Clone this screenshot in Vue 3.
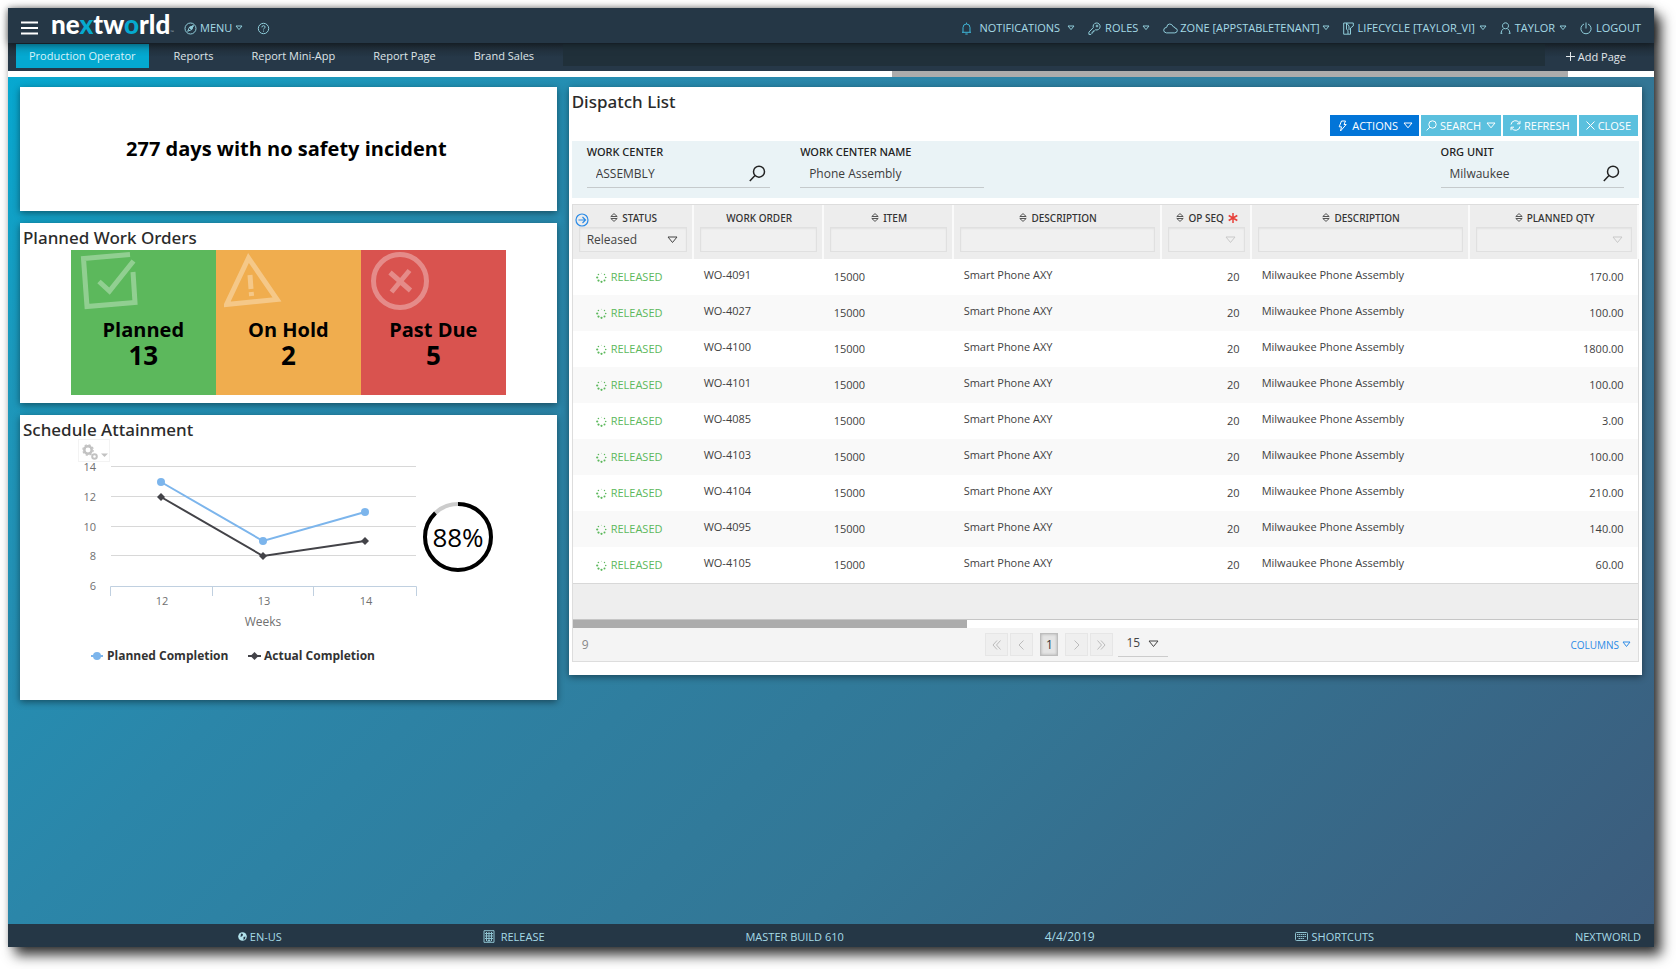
<script setup>
import { ref } from 'vue'

const tabs = ['Production Operator', 'Reports', 'Report Mini-App', 'Report Page', 'Brand Sales']
const activeTab = ref(0)

const orders = [
  ['WO-4091', '170.00'],
  ['WO-4027', '100.00'],
  ['WO-4100', '1800.00'],
  ['WO-4101', '100.00'],
  ['WO-4085', '3.00'],
  ['WO-4103', '100.00'],
  ['WO-4104', '210.00'],
  ['WO-4095', '140.00'],
  ['WO-4105', '60.00'],
].map(([id, qty]) => ({ id, qty }))

const status = ref('Released')
const pageSize = ref('15')
const workCenter = ref('ASSEMBLY')
const workCenterName = ref('Phone Assembly')
const orgUnit = ref('Milwaukee')

const columns = [
  { label: 'STATUS', sort: true, kind: 'status' },
  { label: 'WORK ORDER', sort: false, kind: 'text' },
  { label: 'ITEM', sort: true, kind: 'text' },
  { label: 'DESCRIPTION', sort: true, kind: 'text' },
  { label: 'OP SEQ', sort: true, kind: 'number', required: true },
  { label: 'DESCRIPTION', sort: true, kind: 'text' },
  { label: 'PLANNED QTY', sort: true, kind: 'number' },
]

const gridLines = [
  { v: 14, y: 28 },
  { v: 12, y: 58 },
  { v: 10, y: 88 },
  { v: 8, y: 117 },
]
const weeks = [
  { v: 12, x: 84 },
  { v: 13, x: 186 },
  { v: 14, x: 288 },
]
const planned = [[83, 43], [185, 102], [287, 73]]
const actual = [[83, 58], [185, 117], [287, 102]]
const line = (pts) => pts.map((p) => p.join(',')).join(' ')
</script>

<template>
  <div class="frame">
    <header class="topbar">
      <button class="plain burger" aria-label="Open navigation">
        <svg width="17" height="14" viewBox="0 0 17 14"><path d="M0 1.5h17M0 7h17M0 12.5h17" stroke="#fff" stroke-width="2" /></svg>
      </button>
      <a href="#" class="logo">ne<span>x</span>tw<span>o</span>rld<small>™</small></a>
      <button class="plain nav menu">
        <svg width="13" height="13" viewBox="0 0 13 13"><circle cx="6.5" cy="6.5" r="5.5" /><path d="M9.3 3.7 7.6 7.6 3.7 9.3 5.4 5.4z" /><path class="fill" d="M9.3 3.7 7.6 7.6 5.4 5.4z" /></svg>
        MENU
        <svg class="tri" width="8" height="6" viewBox="0 0 8 6"><path d="M1 1h6L4 4.6z" /></svg>
      </button>
      <button class="plain nav help" aria-label="Help">
        <svg width="13" height="13" viewBox="0 0 13 13"><circle cx="6.5" cy="6.5" r="5.2" /><path d="M4.9 5.3q0-1.6 1.6-1.6t1.6 1.4q0 .8-.9 1.2-.7.4-.7 1.1M6.5 8.6v1" /></svg>
      </button>
      <nav class="right">
        <button class="plain nav bell">
          <svg width="11" height="13" viewBox="0 0 11 13"><path d="M1 10.3h9M2 10.3V5.6q0-3.6 3.5-3.6T9 5.6v4.7M5.5.6V2M4.3 12h2.4" /></svg>
          NOTIFICATIONS
          <svg class="tri" width="8" height="6" viewBox="0 0 8 6"><path d="M1 1h6L4 4.6z" /></svg>
        </button>
        <button class="plain nav">
          <svg width="13" height="13" viewBox="0 0 13 13"><path d="M5.3 5.6a3.5 3.5 0 1 1 2.2 2.2L6.4 8.9H5.3v1.2H4.1v1.2L3 12.4H.9v-2.3z" /><circle cx="9" cy="4" r=".9" /></svg>
          ROLES
          <svg class="tri" width="8" height="6" viewBox="0 0 8 6"><path d="M1 1h6L4 4.6z" /></svg>
        </button>
        <button class="plain nav cloud">
          <svg width="15" height="11" viewBox="0 0 15 11"><path d="M3.4 9.9h8.4q2.5-.3 2.5-2.5 0-2-2.4-2.4-.2-1.5-1.7-1.3Q9.200 1 6.700 1 4 1 3.700 4.300.7 4.600.7 7.200q.1 2.400 2.700 2.700z" /></svg>
          ZONE [APPSTABLETENANT]
          <svg class="tri" width="8" height="6" viewBox="0 0 8 6"><path d="M1 1h6L4 4.6z" /></svg>
        </button>
        <button class="plain nav">
          <svg width="11" height="13" viewBox="0 0 11 13"><path d="M.7 1h9.600v3L7.500 6v6.200H.7zM3.500 1v6l1.500 1.800V12M3.500 1 6 4v4" /></svg>
          LIFECYCLE [TAYLOR_VI]
          <svg class="tri" width="8" height="6" viewBox="0 0 8 6"><path d="M1 1h6L4 4.6z" /></svg>
        </button>
        <button class="plain nav">
          <svg width="11" height="12" viewBox="0 0 11 12"><path d="M5.500 6.800a3 3 0 1 1 .01 0M1 11.500q0-3.500 2.800-5M10 11.500q0-3.500-2.800-5M.7 11.300h1.600M8.700 11.300h1.600" /></svg>
          TAYLOR
          <svg class="tri" width="8" height="6" viewBox="0 0 8 6"><path d="M1 1h6L4 4.6z" /></svg>
        </button>
        <button class="plain nav">
          <svg width="12" height="13" viewBox="0 0 12 13"><path d="M4 2a5.100 5.100 0 1 0 4 0M6 .5v6" /></svg>
          LOGOUT
        </button>
      </nav>
    </header>

    <nav class="tabbar">
      <div class="tabs">
        <a v-for="(t, i) in tabs" :key="t" href="#" class="tab" :class="{ on: activeTab === i }" @click.prevent="activeTab = i">{{ t }}</a>
      </div>
      <div class="tabfill"></div>
      <button class="plain addpage">
        <svg width="9" height="9" viewBox="0 0 9 9"><path d="M4.500 0v9M0 4.500h9" stroke="#e2e7ea" /></svg>
        Add Page
      </button>
    </nav>
    <div class="hscroll"><div class="thumb"></div></div>

    <main class="board">
      <div class="col">
        <section class="panel safety"><p>277 days with no safety incident</p></section>

        <section class="panel planned">
          <h2>Planned Work Orders</h2>
          <div class="tiles">
            <div class="tile green">
              <svg width="60" height="60" viewBox="0 0 60 60"><path d="M51 4.500 4.500 8.500 8 56.500l48-4L54 22" /><path d="M20 31.500 30.500 41 54.500 11" /></svg>
              <b>Planned</b><strong>13</strong>
            </div>
            <div class="tile amber">
              <svg width="60" height="60" viewBox="0 0 60 60"><path d="M24.500 8 2.500 54.500 53 49.500z" /><path d="m26 25 1 14M27.200 42l.4 4" /></svg>
              <b>On Hold</b><strong>2</strong>
            </div>
            <div class="tile red">
              <svg width="60" height="60" viewBox="0 0 60 60"><circle cx="31" cy="31" r="26.500" /><path d="m21 22.500 20.500 18M40.500 20.500 22.500 42" /></svg>
              <b>Past Due</b><strong>5</strong>
            </div>
          </div>
        </section>

        <section class="panel schedule">
          <h2>Schedule Attainment</h2>
          <div class="attain">
            <div class="chartbox">
              <svg width="341" height="230" viewBox="0 0 341 230" class="chart">
                <g stroke="#d8d8d8">
                  <path v-for="g in gridLines" :key="g.v" :d="`M33 ${g.y - 0.5}H338`" />
                </g>
                <path d="M32.500 157V147.500H338.500V157M134.500 147.500V157M235.500 147.500V157" fill="none" stroke="#c0d0e0" />
                <g class="axis" text-anchor="end">
                  <text v-for="g in gridLines" :key="g.v" x="18" :y="g.y + 4">{{ g.v }}</text>
                  <text x="18" y="151">6</text>
                </g>
                <g class="axis" text-anchor="middle">
                  <text v-for="w in weeks" :key="w.v" :x="w.x" y="166">{{ w.v }}</text>
                  <text x="185" y="187" class="weeks">Weeks</text>
                </g>
                <polyline :points="line(planned)" fill="none" stroke="#7cb5ec" stroke-width="2" />
                <circle v-for="p in planned" :key="p[0]" :cx="p[0]" :cy="p[1]" r="4" fill="#7cb5ec" />
                <polyline :points="line(actual)" fill="none" stroke="#434348" stroke-width="2" />
                <path v-for="p in actual" :key="p[0]" :d="`M${p[0]} ${p[1] - 4}l4 4-4 4-4-4z`" fill="#434348" />
                <g class="legend">
                  <path d="M13 217h12" stroke="#7cb5ec" stroke-width="2" /><circle cx="19" cy="217" r="4" fill="#7cb5ec" />
                  <text x="29" y="221">Planned Completion</text>
                  <path d="M170 217h13" stroke="#434348" stroke-width="2" /><path d="m176.500 213 4 4-4 4-4-4z" fill="#434348" />
                  <text x="186" y="221">Actual Completion</text>
                </g>
              </svg>
              <button class="plain gears" aria-label="Chart settings">
                <svg width="26" height="18" viewBox="0 0 26 18"><g fill="none" stroke="#c2c2c2"><circle cx="6" cy="7" r="3.700" stroke-width="2.500" /><circle cx="6" cy="7" r="5.200" stroke-width="1.200" stroke-dasharray="2.200 1.880" /><circle cx="12.500" cy="13.500" r="2.300" stroke-width="2" /></g><path d="M19 10.500h7L22.500 14z" fill="#c2c2c2" /></svg>
              </button>
            </div>
            <svg class="gauge" width="72" height="72" viewBox="0 0 72 72">
              <circle cx="36" cy="36" r="33" fill="none" stroke="#ccc" stroke-width="4" />
              <circle cx="36" cy="36" r="33" fill="none" stroke="#000" stroke-width="4" pathLength="100" stroke-dasharray="88 12" transform="rotate(-90 36 36)" />
              <text x="36" y="46" text-anchor="middle">88%</text>
            </svg>
          </div>
        </section>
      </div>

      <section class="panel dispatch">
        <h2>Dispatch List</h2>
        <div class="actions">
          <button class="act primary">
            <svg width="9" height="12" viewBox="0 0 9 12"><path d="M3.500 1h4L6 4.500h2.200L2.500 11l1-4.200H1.200z" /></svg>ACTIONS
            <svg class="tri" width="10" height="7" viewBox="0 0 10 7"><path d="M1 1h8L5 5.800z" /></svg>
          </button>
          <button class="act find">
            <svg width="11" height="11" viewBox="0 0 11 11"><circle cx="6.500" cy="4.500" r="3.700" /><path d="M3.800 7.200.6 10.400" /></svg>SEARCH
            <svg class="tri" width="10" height="7" viewBox="0 0 10 7"><path d="M1 1h8L5 5.800z" /></svg>
          </button>
          <button class="act">
            <svg width="11" height="11" viewBox="0 0 11 11"><path d="M1 4.500A4.500 4.500 0 0 1 9.500 3.200M10 .8v3H7M10 6.500A4.500 4.500 0 0 1 1.500 7.800M1 10.200v-3h3" /></svg>REFRESH
          </button>
          <button class="act">
            <svg width="9" height="9" viewBox="0 0 9 9"><path d="m.5.5 8 8M8.500.5l-8 8" /></svg>CLOSE
          </button>
        </div>

        <div class="filters">
          <div class="field">
            <label for="wc">WORK CENTER</label>
            <div class="line">
              <input id="wc" v-model="workCenter" type="text" />
              <button class="plain" aria-label="Look up work center"><svg width="17" height="17" viewBox="0 0 17 17"><circle cx="10" cy="6.700" r="5.500" /><path d="M6 10.600.8 16" /></svg></button>
            </div>
          </div>
          <div class="field">
            <label for="wcn">WORK CENTER NAME</label>
            <div class="line"><input id="wcn" v-model="workCenterName" type="text" /></div>
          </div>
          <div class="field last">
            <label for="org">ORG UNIT</label>
            <div class="line">
              <input id="org" v-model="orgUnit" type="text" />
              <button class="plain" aria-label="Look up org unit"><svg width="17" height="17" viewBox="0 0 17 17"><circle cx="10" cy="6.700" r="5.500" /><path d="M6 10.600.8 16" /></svg></button>
            </div>
          </div>
        </div>

        <div class="gridbox">
          <table>
            <colgroup><col class="c1" /><col class="c2" /><col class="c2" /><col class="c4" /><col class="c5" /><col class="c6" /><col class="c7" /></colgroup>
            <thead>
              <tr>
                <th v-for="(c, i) in columns" :key="i" scope="col">
                  <button v-if="c.kind === 'status'" class="plain expand" aria-label="Expand list">
                    <svg width="14" height="14" viewBox="0 0 14 14"><circle cx="7" cy="7" r="6" /><path d="M3.500 7h7M7.500 4l3 3-3 3" /></svg>
                  </button>
                  <div class="cap">
                    <svg v-if="c.sort" width="8" height="9" viewBox="0 0 8 9"><path d="M.8 3.500h6.400L4 .6zM.8 5.500h6.400L4 8.400z" /></svg>
                    <span>{{ c.label }}</span>
                    <svg v-if="c.required" class="req" width="10" height="10" viewBox="0 0 10 10"><path d="M5 0v10M.7 2.500l8.600 5M9.300 2.500l-8.600 5" /></svg>
                  </div>
                  <div v-if="c.kind === 'status'" class="pick box">
                    <select v-model="status" aria-label="Filter by status"><option>Released</option></select>
                    <svg width="11" height="8" viewBox="0 0 11 8"><path d="M1 1h9L5.500 6.500z" /></svg>
                  </div>
                  <div v-else-if="c.kind === 'number'" class="pick box faint">
                    <select :aria-label="'Filter by ' + c.label"><option></option></select>
                    <svg width="11" height="8" viewBox="0 0 11 8"><path d="M1 1h9L5.500 6.500z" /></svg>
                  </div>
                  <input v-else class="box" type="text" :aria-label="'Filter by ' + c.label" />
                </th>
              </tr>
            </thead>
            <tbody>
              <tr v-for="o in orders" :key="o.id">
                <td class="status">
                  <div>
                    <svg width="11" height="11" viewBox="0 0 11 11"><circle cx="9.700" cy="5.500" r=".8" /><circle cx="8.500" cy="8.500" r="1" /><circle cx="5.500" cy="9.800" r="1.100" /><circle cx="2.500" cy="8.600" r="1.100" /><circle cx="1.200" cy="5.500" r="1.100" /><circle cx="2.400" cy="2.500" r=".8" /><circle cx="5.500" cy="1.200" r=".4" /><circle cx="8.500" cy="2.500" r=".7" /></svg>
                    RELEASED
                  </div>
                </td>
                <td class="up">{{ o.id }}</td>
                <td>15000</td>
                <td class="up">Smart Phone AXY</td>
                <td class="num">20</td>
                <td class="up">Milwaukee Phone Assembly</td>
                <td class="num qty">{{ o.qty }}</td>
              </tr>
            </tbody>
          </table>
          <div class="sumrow"></div>
          <div class="gscroll"><div></div></div>
          <div class="pager">
            <span class="count">9</span>
            <div class="pages">
              <button class="pg" aria-label="First page"><svg width="9" height="10" viewBox="0 0 9 10"><path d="m5 .5-4 4.500 4 4.500M8.500.5l-4 4.500 4 4.500" /></svg></button>
              <button class="pg" aria-label="Previous page"><svg width="9" height="10" viewBox="0 0 9 10"><path d="M6.500.5 2 5l4.500 4.500" /></svg></button>
              <button class="pg cur">1</button>
              <button class="pg" aria-label="Next page"><svg width="9" height="10" viewBox="0 0 9 10"><path d="M2.500.5 7 5 2.500 9.500" /></svg></button>
              <button class="pg" aria-label="Last page"><svg width="9" height="10" viewBox="0 0 9 10"><path d="m.5.5 4 4.500-4 4.500M4 .5 8 5 4 9.500" /></svg></button>
              <div class="pick size">
                <select v-model="pageSize" aria-label="Rows per page"><option>15</option></select>
                <svg width="11" height="8" viewBox="0 0 11 8"><path d="M1 1h9L5.500 6.500z" /></svg>
              </div>
            </div>
            <button class="plain cols">COLUMNS <svg width="9" height="7" viewBox="0 0 9 7"><path d="M1 1h7L4.500 5.500z" /></svg></button>
          </div>
        </div>
      </section>
    </main>

    <footer class="status-bar">
      <span class="lead"></span>
      <span><svg width="9" height="9" viewBox="0 0 9 9"><circle cx="4.500" cy="4.500" r="4.300" fill="#b3e3ec" /><path d="M3 1.500 5 2 4.500 4 2.500 5zM5.500 5l2-.5-.5 2.500-1.500 1z" fill="#253746" /></svg>EN-US</span>
      <span class="wide"><svg width="12" height="13" viewBox="0 0 12 13"><path d="M1 .7h10v11.600H1zM3.500 2v9M6 2v8M8.500 2v9M2 3.500h8M2 6h8M2 8.500h8M5 12v-1.500h2V12" fill="none" stroke="#8fc3d0" /></svg>RELEASE</span>
      <span>MASTER BUILD 610</span>
      <span class="date">4/4/2019</span>
      <span><svg width="13" height="9" viewBox="0 0 13 9"><rect x=".5" y=".5" width="12" height="8" rx="1" fill="none" stroke="#8fc3d0" /><path d="M2 2.500h9M2 4.500h9M3.500 6.500h6" stroke="#8fc3d0" stroke-dasharray="1.500 .5" /></svg>SHORTCUTS</span>
      <span>NEXTWORLD</span>
    </footer>
  </div>
</template>

<style>
html, body { background: #fff; }
body { margin: 0; }
</style>

<style scoped>
* { box-sizing: border-box; }
.frame {
  margin: 8px 22px 22px 8px;
  min-height: calc(100vh - 30px);
  display: flex;
  flex-direction: column;
  background: #fff;
  box-shadow: 7px 8px 12px rgba(0, 0, 0, .8), 0 0 5px rgba(0, 0, 0, .15);
  font-family: "Open Sans", "Noto Sans", sans-serif;
  font-size: 11px;
  color: #333;
}
button, input, select { font: inherit; color: inherit; border-radius: 0; }
.plain { background: none; border: 0; padding: 0; cursor: pointer; }
svg { display: block; flex: none; }
h2, .field label, th { font-family: "Noto Sans", "Open Sans", sans-serif; font-weight: 500; }
h2 { margin: 0; font-size: 17px; line-height: 24px; color: #2b2b2b; }

.topbar {
  height: 35px;
  display: flex;
  align-items: center;
  background: #253746;
  padding: 5px 13px 0;
  position: relative;
  box-shadow: 0 1px 8px rgba(0, 0, 0, .5);
}
.logo {
  margin-left: 13px;
  font: 900 26px/28px Lato, sans-serif;
  color: #fff;
  text-decoration: none;
}
.logo span { color: #06a9cf; }
.logo small { font-size: 5px; font-weight: 400; color: #8fa0ab; }
.nav {
  display: flex;
  align-items: center;
  gap: 4px;
  color: #a5dbe7;
  line-height: 16px;
  white-space: nowrap;
}
.nav svg { fill: none; stroke: #8fccd9; stroke-width: 1; }
.nav svg .fill { fill: #8fccd9; }
.menu { margin-left: 10px; gap: 3px; }
.help { margin-left: 14px; }
.bell { gap: 7px; }
.bell svg:first-child { stroke: #3fb6d8; }
.cloud { gap: 2px; }
.right { margin-left: auto; display: flex; gap: 13px; }

.tabbar { display: flex; height: 28px; background: linear-gradient(#1f2b35, #263848 50%); }
.tabs { display: flex; gap: 12px; padding: 1px 16px 3px 8px; }
.tab {
  padding: 0 13px;
  line-height: 24px;
  color: #dfe5e8;
  text-decoration: none;
  white-space: nowrap;
}
.tab.on { background: linear-gradient(#0a96b9, #04a9d1 50%); color: #d9f3f9; }
.tabfill { flex: 1; margin: 1px 0 5px; background: #20303a; }
.addpage {
  display: flex;
  align-items: center;
  gap: 3px;
  padding: 0 28px 2px 21px;
  color: #e2e7ea;
}
.hscroll { height: 6px; background: #fff; padding-right: 86px; }
.thumb { height: 6px; width: 676px; max-width: 50%; margin-left: auto; background: #acacac; }

.board {
  flex: 1;
  display: grid;
  grid-template-columns: minmax(0, 1fr) minmax(0, 2fr);
  align-items: start;
  gap: 12px;
  padding: 10px 12px;
  background: linear-gradient(135deg, #06a8d0, #1c98bb 12%, #268cb0 25%, #2b86a9 34%, #337695 66%, #3c5b7b);
}
.col { display: flex; flex-direction: column; gap: 12px; }
.panel { background: #fff; box-shadow: 0 2px 7px rgba(0, 0, 0, .45); padding: 3px; }
.safety { height: 124px; display: flex; align-items: center; justify-content: center; padding: 0 4px 2px 0; }
.safety p { margin: 0; font-size: 20px; font-weight: 700; color: #000; }
.planned { padding-bottom: 8px; }
.tiles { display: grid; grid-template-columns: repeat(3, 145px); justify-content: center; }
.tile {
  height: 145px;
  display: flex;
  flex-direction: column;
  align-items: center;
  color: #000;
}
.tile svg { align-self: flex-start; margin-left: 8px; height: 60px; fill: none; stroke: rgba(255, 255, 255, .33); stroke-width: 5; }
.tile b { font-size: 20px; line-height: 26px; margin-top: 7px; }
.tile strong { font-size: 26px; line-height: 25px; }
.green { background: #5cb85c; }
.amber { background: #f0ad4e; }
.red { background: #d9534f; }

.schedule { min-height: 285px; }
.attain { display: flex; justify-content: center; margin-top: -3px; padding-right: 4px; gap: 3px; }
.chartbox { position: relative; }
.gears { position: absolute; left: 0; top: 0; width: 32px; height: 23px; padding: 3px; border: 1px solid #f3f3f3; }
.axis text { font-size: 11px; fill: #707070; }
.axis .weeks { font-size: 12px; }
.legend text { font-size: 12px; font-weight: 700; fill: #333; }
.gauge { margin-top: 62px; }
.gauge text { font-size: 26px; fill: #000; }

.dispatch { padding-bottom: 13px; }
.actions { display: flex; justify-content: flex-end; gap: 2px; margin: 1px 1px 5px; }
.act {
  height: 21px;
  display: flex;
  align-items: center;
  gap: 3px;
  padding: 0 7px;
  border: 0;
  background: #5bc0de;
  color: #fff;
  cursor: pointer;
}
.act svg { fill: none; stroke: #fff; }
.act .tri { margin-left: 2px; }
.find { padding: 0 5px; }
.primary { background: #0275d8; gap: 5px; padding: 0 6px 0 8px; }
.primary .tri { margin-left: 0; }

.filters { display: grid; grid-template-columns: repeat(5, minmax(0, 1fr)); background: #eaf3f6; height: 57px; }
.field { padding: 3px 15px; }
.field.last { grid-column: 5; }
.field label { display: block; line-height: 16px; color: #222; }
.line { display: flex; align-items: center; height: 28px; border-bottom: 1px solid #c5cacc; padding: 0 4px 0 9px; }
.line input { flex: 1; min-width: 0; border: 0; background: none; padding: 0; font-size: 12px; height: 22px; color: #3c3c3c; }
.line svg { fill: none; stroke: #222; stroke-width: 1.500; }

.gridbox { margin-top: 6px; border: 1px solid #ddd; }
table { width: 100%; table-layout: fixed; border-collapse: collapse; }
.c1 { width: 120px; }
.c2 { width: 130px; }
.c4 { width: 208px; }
.c5 { width: 90px; }
.c6 { width: 218px; }
.c7 { width: 169px; }
th {
  position: relative;
  height: 54px;
  padding: 3px 5px 7px 6px;
  background: #ededed;
  border-right: 2px solid #fafafa;
  font-size: 10px;
  vertical-align: top;
  color: #333;
}
.cap { display: flex; align-items: center; justify-content: center; gap: 4px; height: 19px; padding-left: 2px; }
.cap svg { fill: none; stroke: #555; stroke-width: 1; }
.cap .req { stroke: #e8403a; stroke-width: 1.500; }
.expand { position: absolute; left: 2px; top: 8px; }
.expand svg { fill: none; stroke: #2c8be6; stroke-width: 1.200; }
.box { display: block; width: 100%; height: 25px; border: 1px solid #e0e0e0; background: #f0f0f0; box-shadow: inset 0 1px 2px rgba(0, 0, 0, .06); padding: 0 7px; }
.pick { display: grid; align-items: center; }
.pick > * { grid-area: 1 / 1; }
.pick svg { justify-self: end; pointer-events: none; fill: none; stroke: #444; margin-right: 1px; }
.pick select { appearance: none; width: 100%; height: 23px; border: 0; padding: 0; background: none; font-family: "Open Sans", sans-serif; font-size: 12px; font-weight: 400; color: #444; }
.faint svg { stroke: #c9c9c9; }
td { height: 36px; padding: 0 11px; line-height: 16px; color: #3f3f3f; white-space: nowrap; }
td.up { padding-bottom: 4px; }
td.num { text-align: right; }
td.qty { padding-right: 14px; }
tbody tr:nth-child(even) { background: #f9f9f9; }
.status div { display: flex; align-items: center; gap: 4px; padding-left: 12px; color: #5cb85c; }
.status svg { fill: #5cb85c; }
.sumrow { height: 37px; background: #eee; border-top: 1px solid #d8d8d8; border-bottom: 1px solid #c6c6c6; }
.gscroll { height: 8px; background: #fff; }
.gscroll div { height: 8px; width: 37%; background: #acacac; }
.pager { display: flex; align-items: center; justify-content: space-between; height: 33px; padding: 0 7px 0 9px; background: #f4f4f4; }
.count { font-size: 12px; color: #888; }
.pages { display: flex; align-items: center; gap: 2px; margin-right: 5px; }
.pg { width: 23px; height: 23px; padding: 0; display: flex; align-items: center; justify-content: center; border: 1px solid #e6e6e6; background: #efefef; }
.pg svg { fill: none; stroke: #bbb; }
.pg.cur { width: 18px; margin: 0 5px; font-size: 12px; background: #e4e4e4; border-color: #bdbdbd; box-shadow: inset 0 0 3px rgba(0, 0, 0, .25); }
.size { width: 50px; margin-left: 3px; border-bottom: 1px solid #ccc; padding: 0 8px; }
.size select { padding-bottom: 4px; }
.cols { display: flex; align-items: center; gap: 3px; font-size: 10px; color: #2c8be6; }
.cols svg { fill: none; stroke: #2c8be6; }

.status-bar { height: 23px; display: flex; align-items: center; justify-content: space-between; padding: 1px 13px 0; background: #253746; color: #a5dbe7; }
.status-bar span { display: flex; align-items: center; gap: 3px; }
.status-bar .wide { gap: 6px; }
.status-bar .date { font-size: 12px; }
.lead { width: 16px; }
</style>
